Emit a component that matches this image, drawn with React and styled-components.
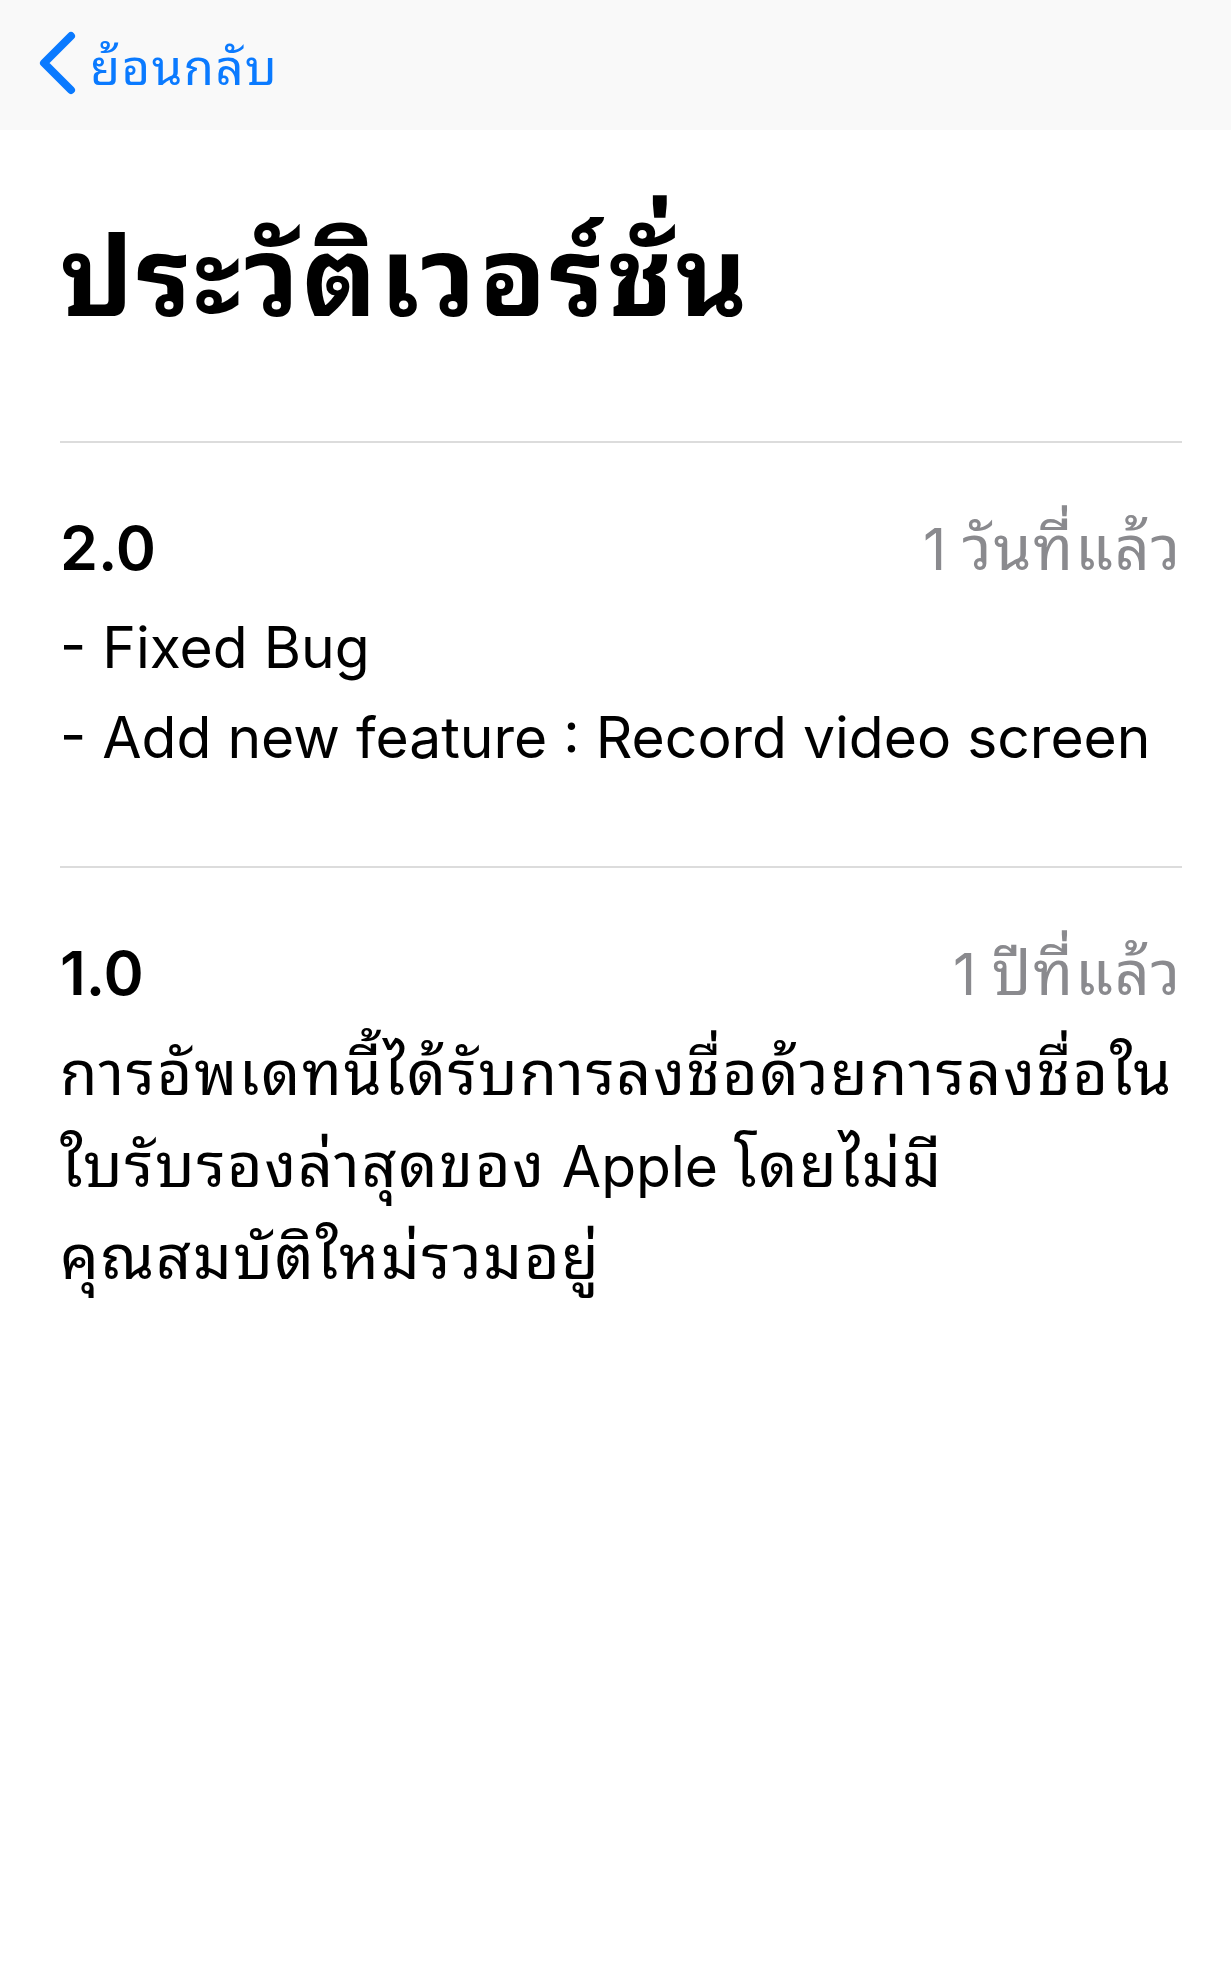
import React from "react";
import styled, { createGlobalStyle } from "styled-components";

const GlobalStyle = createGlobalStyle`
    html, body {
        margin:0;
        padding:0;
        background:#ffffff;
    }
    body {
        font-family: Inter, "Noto Sans Thai Looped", "Noto Sans Thai", sans-serif;
        color:#000000;
    }
`;

const Page = styled.div`
    width:1231px;
    min-height:1982px;
    background:#ffffff;
`;

const NavBar = styled.div`
    height:130px;
    background:#f9f9f9;
    display:flex;
    align-items:center;
    padding:0 0 0 38px;
    box-sizing:border-box;
`;

const BackButton = styled.div`
    display:flex;
    align-items:center;
    gap:14px;
    color:#0a7aff;
    font-size:49px;
    letter-spacing:1.5px;
    cursor:pointer;
    margin-top:-4px;
`;

const Content = styled.div`
    padding:0 49px 0 60px;
`;

const Title = styled.h1`
    margin:0;
    padding:72px 0 0;
    height:313px;
    box-sizing:border-box;
    font-size:110px;
    font-weight:700;
    letter-spacing:3px;
    line-height:1.36;
    border-bottom:2px solid #dcdcdc;
`;

const Section = styled.div`
    padding:60px 0 83px;
    border-bottom:${props => props.last ? "none" : "2px solid #dcdcdc"};
`;

const Header = styled.div`
    display:flex;
    justify-content:space-between;
    align-items:baseline;
`;

const Version = styled.div`
    font-size:61px;
    font-weight:600;
    line-height:90px;
`;

const When = styled.div`
    font-size:57px;
    color:#8a8a8e;
    line-height:90px;
`;

const Notes = styled.div`
    margin-top:8px;
    font-size:57px;
    line-height:90px;
`;

const Thai = styled.span`
    font-size:1.07em;
    letter-spacing:0.03em;
`;

function App(){
    return(
        <Page>
            <GlobalStyle/>
            <NavBar>
                <BackButton>
                    <svg width="38" height="64" viewBox="0 0 38 64">
                        <path d="M33 5 L6 32 L33 59" fill="none" stroke="#0a7aff" strokeWidth="8" strokeLinecap="round" strokeLinejoin="round"/>
                    </svg>
                    ย้อนกลับ
                </BackButton>
            </NavBar>
            <Content>
                <Title>ประวัติเวอร์ชั่น</Title>
                <Section>
                    <Header>
                        <Version>2.0</Version>
                        <When>1 <Thai>วันที่แล้ว</Thai></When>
                    </Header>
                    <Notes>
                        - Fixed Bug<br/>
                        - Add new feature : Record video screen
                    </Notes>
                </Section>
                <Section last>
                    <Header>
                        <Version>1.0</Version>
                        <When>1 <Thai>ปีที่แล้ว</Thai></When>
                    </Header>
                    <Notes>
                        <Thai>การอัพเดทนี้ได้รับการลงชื่อด้วยการลงชื่อใน</Thai><br/>
                        <Thai>ใบรับรองล่าสุดของ</Thai> Apple <Thai>โดยไม่มี</Thai><br/>
                        <Thai>คุณสมบัติใหม่รวมอยู่</Thai>
                    </Notes>
                </Section>
            </Content>
        </Page>
    );
}
export default App;
